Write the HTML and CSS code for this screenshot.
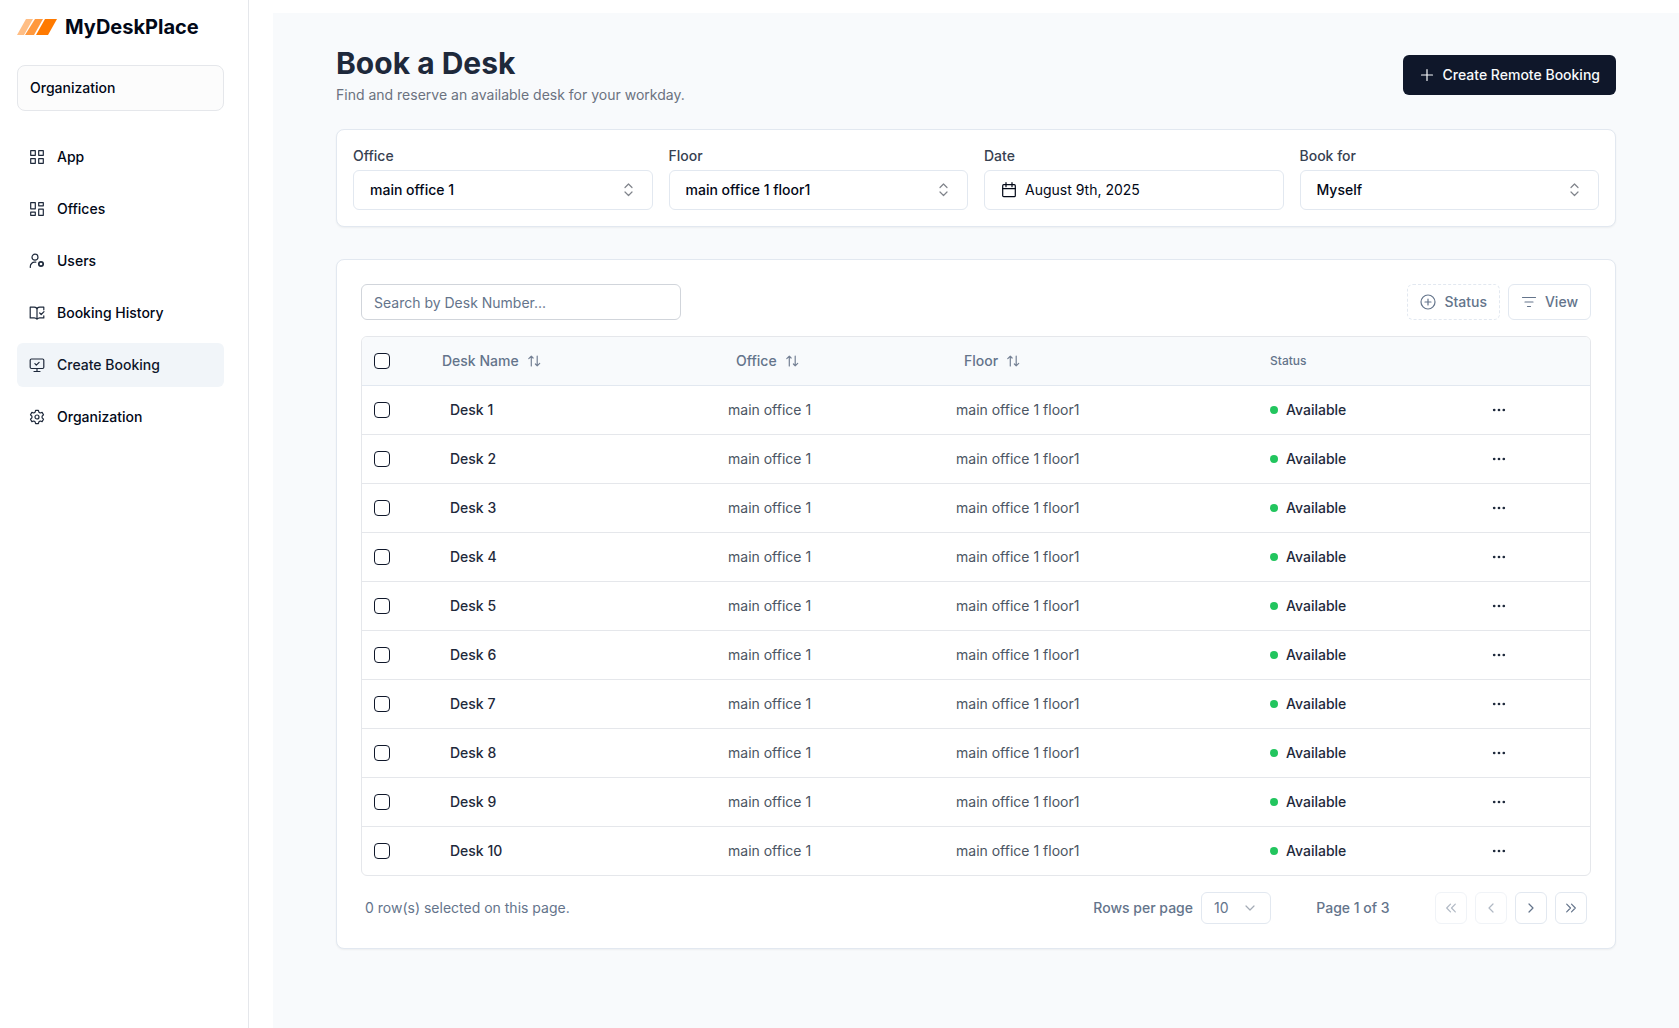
FILE: index.html
```html
<!DOCTYPE html>
<html lang="en">
<head>
<meta charset="utf-8">
<meta name="viewport" content="width=device-width, initial-scale=1">
<title>Book a Desk - MyDeskPlace</title>
<link rel="stylesheet" href="styles.css">
</head>
<body>
<svg class="sprite" aria-hidden="true">
  <symbol id="i-updown" viewBox="0 0 16 16"><path d="M4 5.500 7.500 2 11 5.500M4 10l3.500 3.500L11 10"/></symbol>
  <symbol id="i-sort" viewBox="0 0 16 16"><path d="M4.300 13V3.200M1.800 5.700l2.500-2.500 1.800 1.800M10.200 3v9.800M12.700 10.300l-2.500 2.500-1.800-1.800"/></symbol>
  <symbol id="i-dots" viewBox="0 0 16 16"><g fill="currentColor" stroke="none"><circle cx="3.200" cy="8" r="1.350"/><circle cx="8" cy="8" r="1.350"/><circle cx="12.800" cy="8" r="1.350"/></g></symbol>
</svg>
<div class="app">
  <aside class="sidebar">
    <a class="brand" href="#">
      <svg width="40" height="16" viewBox="0 0 40 16"><path fill="#ffbe85" d="M9 0h7L7 16H0z"/><path fill="#ff983d" d="M18 0h8l-9 16H8z"/><path fill="#ff7a00" d="M28 0h12l-9 16H19z"/></svg>
      <span>MyDeskPlace</span>
    </a>
    <div class="org">Organization</div>
    <nav class="nav">
      <a href="#"><svg class="icon" viewBox="0 0 16 16"><path d="M1.700 1.700h4.600v4.600H1.700zM9.700 1.700h4.600v4.600H9.700zM1.700 9.700h4.600v4.600H1.700zM9.700 9.700h4.600v4.600H9.700z"/></svg>App</a>
      <a href="#"><svg class="icon" viewBox="0 0 16 16"><path d="M1.700 1.700h4.600v6.100H1.700zM9.700 1.700h4.600v3.100H9.700zM1.700 11.200h4.600v3.100H1.700zM9.700 8.200h4.600v6.100H9.700z"/></svg>Offices</a>
      <a href="#"><svg class="icon" viewBox="0 0 16 16"><circle cx="6" cy="4.200" r="3"/><path d="M1.300 14.500v-1a4.300 4.300 0 0 1 4.300-4.300h1.200"/><circle cx="12" cy="11" r="2.200" stroke-width="1.700"/></svg>Users</a>
      <a href="#"><svg class="icon" viewBox="0 0 16 16"><path d="M8 14.200c-.8-.9-1.500-1.300-2.800-1.300H1.200V2.200h4c1.800 0 2.800.9 2.800 2.400v9.600c.8-.9 1.500-1.300 2.800-1.300h4V10.800M8 4.600c0-1.500 1-2.400 2.800-2.400h4v2.600M10.700 8l1.500 1.500 2.800-2.800"/></svg>Booking History</a>
      <a href="#" class="active" aria-current="page"><svg class="icon" viewBox="0 0 16 16"><rect x="1.200" y="2" width="13.600" height="9.500" rx="1.200"/><path d="M8 11.500V14.500M5 14.500h6M5.900 6.700l1.400 1.400 2.800-2.800"/></svg>Create Booking</a>
      <a href="#"><svg class="icon" viewBox="0 0 16 16"><path d="M6.600 1.300h2.800l.5 1.900 1.300.8 1.900-.6 1.400 2.400-1.400 1.400v1.600l1.400 1.400-1.400 2.400-1.900-.6-1.300.8-.5 1.900H6.600l-.5-1.900-1.300-.8-1.900.6-1.400-2.400 1.400-1.400V7.200L1.500 5.800l1.400-2.400 1.900.6 1.300-.8z"/><circle cx="8" cy="8" r="2"/></svg>Organization</a>
    </nav>
  </aside>
  <main class="main">
    <div class="content">
      <header class="head">
        <div>
          <h1>Book a Desk</h1>
          <p>Find and reserve an available desk for your workday.</p>
        </div>
        <button class="primary" type="button"><svg class="icon" viewBox="0 0 16 16"><path d="M8 2.500v11M2.500 8h11"/></svg>Create Remote Booking</button>
      </header>

      <section class="card filters">
        <div class="field">
          <label for="office">Office</label>
          <div class="select"><select id="office"><option>main office 1</option></select><svg class="icon"><use href="#i-updown"/></svg></div>
        </div>
        <div class="field">
          <label for="floor">Floor</label>
          <div class="select"><select id="floor"><option>main office 1 floor1</option></select><svg class="icon"><use href="#i-updown"/></svg></div>
        </div>
        <div class="field">
          <label for="date">Date</label>
          <button class="date" id="date" type="button"><svg class="icon" viewBox="0 0 16 16"><rect x="1.700" y="2.700" width="12.600" height="12" rx="1"/><path d="M1.700 6.700h12.600M5 .7v4M11 .7v4"/></svg>August 9th, 2025</button>
        </div>
        <div class="field">
          <label for="bookfor">Book for</label>
          <div class="select"><select id="bookfor"><option>Myself</option></select><svg class="icon"><use href="#i-updown"/></svg></div>
        </div>
      </section>

      <section class="card desks">
        <div class="toolbar">
          <input class="search" type="text" placeholder="Search by Desk Number..." aria-label="Search by Desk Number">
          <div class="tools">
            <button class="tool dashed" type="button"><svg class="icon" viewBox="0 0 16 16"><circle cx="8" cy="8" r="7"/><path d="M8 5v6M5 8h6"/></svg>Status</button>
            <button class="tool" type="button"><svg class="icon" viewBox="0 0 16 16"><path d="M1.500 3.500h13M4 8h8M6.500 12.500h3"/></svg>View</button>
          </div>
        </div>
        <div class="table-box">
          <table>
            <colgroup><col class="c-check"><col class="c-name"><col class="c-office"><col class="c-floor"><col class="c-status"><col class="c-more"></colgroup>
            <thead>
              <tr>
                <th><input type="checkbox" aria-label="Select all"></th>
                <th><button class="sort" type="button">Desk Name<svg class="icon"><use href="#i-sort"/></svg></button></th>
                <th><button class="sort inset" type="button">Office<svg class="icon"><use href="#i-sort"/></svg></button></th>
                <th><button class="sort inset" type="button">Floor<svg class="icon"><use href="#i-sort"/></svg></button></th>
                <th>Status</th>
                <th></th>
              </tr>
            </thead>
            <tbody id="rows"></tbody>
          </table>
        </div>
        <footer class="foot">
          <span class="selected">0 row(s) selected on this page.</span>
          <div class="paging">
            <div class="per-page">
              <label for="size">Rows per page</label>
              <div class="select small"><select id="size"><option>10</option></select><svg class="icon" viewBox="0 0 16 16"><path d="m3 6 4 4 4-4"/></svg></div>
            </div>
            <span class="page">Page 1 of 3</span>
            <div class="pager">
              <button type="button" disabled aria-label="First page"><svg class="icon" viewBox="0 0 16 16"><path d="M7.500 4.200 3.700 8l3.800 3.800M12.300 4.200 8.500 8l3.800 3.800"/></svg></button>
              <button type="button" disabled aria-label="Previous page"><svg class="icon" viewBox="0 0 16 16"><path d="M10 4 6 8l4 4"/></svg></button>
              <button type="button" aria-label="Next page"><svg class="icon" viewBox="0 0 16 16"><path d="M6 4l4 4-4 4"/></svg></button>
              <button type="button" aria-label="Last page"><svg class="icon" viewBox="0 0 16 16"><path d="M3.700 4.200 7.500 8l-3.800 3.800M8.500 4.200 12.300 8l-3.800 3.800"/></svg></button>
            </div>
          </div>
        </footer>
      </section>
    </div>
  </main>
</div>
<script src="desks.js"></script>
</body>
</html>
```
FILE: styles.css
```css
*, *::before, *::after { box-sizing: border-box; }
body { margin: 0; background: #fff; color: #020817; font: 14px/20px Inter, "Liberation Sans", sans-serif; }
button, input, select { font: inherit; color: inherit; margin: 0; }
button { cursor: pointer; background: none; border: 0; padding: 0; }
a { color: inherit; text-decoration: none; }
.sprite { display: none; }
.icon { width: 16px; height: 16px; flex: none; fill: none; stroke: currentColor; stroke-width: 1.2; stroke-linecap: round; stroke-linejoin: round; }

.app { display: flex; min-height: 100vh; }
.sidebar { flex: 0 0 249px; padding: 12px 24px 0 17px; border-right: 1px solid #e5e7eb; }
.brand { display: flex; align-items: center; gap: 8px; height: 30px; font-size: 20px; line-height: 30px; font-weight: 700; }
.org { margin-top: 23px; padding: 12px; border: 1px solid #e5e7eb; border-radius: 8px; background: #fcfcfc; font-weight: 500; }
.nav { display: grid; gap: 8px; margin-top: 24px; }
.nav a { display: flex; align-items: center; gap: 12px; height: 44px; padding: 0 12px; border-radius: 6px; font-weight: 500; }
.nav .active { background: #f1f5f9; color: #0f172a; }
.nav .icon { color: #1e293b; }

.main { flex: 1; min-width: 0; margin: 13px 0 0 24px; padding-top: 32px; background: #f8fafc; }
.content { max-width: 1280px; margin: 0 auto; }
.head { display: flex; justify-content: space-between; align-items: center; }
h1 { margin: 0; font-size: 30px; line-height: 36px; font-weight: 700; color: #1e293b; }
.head p { margin: 4px 0 0; color: #6b7280; }
.primary { display: flex; align-items: center; gap: 8px; height: 40px; padding: 0 16px; border-radius: 6px; background: #0f172a; color: #f8fafc; font-weight: 500; }

.card { border: 1px solid #e2e8f0; border-radius: 8px; background: #fff; box-shadow: 0 1px 2px rgba(0, 0, 0, .05); }
.filters { display: grid; grid-template-columns: repeat(4, 1fr); gap: 16px; margin-top: 24px; padding: 16px; }
.field { display: grid; gap: 4px; }
.field label { font-weight: 500; color: #374151; }
.select { display: grid; align-items: center; }
.select > * { grid-area: 1 / 1; }
.select select { appearance: none; width: 100%; height: 40px; padding: 0 16px; border: 1px solid #e2e8f0; border-radius: 6px; background: #fff; font-weight: 500; }
.select .icon { justify-self: end; margin-right: 16px; pointer-events: none; color: #80848b; }
.date { display: flex; align-items: center; gap: 8px; height: 40px; padding: 0 16px; border: 1px solid #e2e8f0; border-radius: 6px; background: #fff; }

.desks { margin-top: 32px; padding: 24px; }
.toolbar { display: flex; justify-content: space-between; }
.search { width: 320px; height: 36px; padding: 0 12px; border: 1px solid #d1d5db; border-radius: 6px; background: #fff; }
.search::placeholder { color: #64748b; opacity: 1; }
.tools { display: flex; gap: 8px; }
.tool { display: flex; align-items: center; gap: 8px; height: 36px; padding: 0 12px; border: 1px solid #e2e8f0; border-radius: 6px; background: #fff; color: #64748b; font-weight: 500; }
.dashed { border-style: dashed; }
.table-box { margin-top: 16px; border: 1px solid #e5e7eb; border-radius: 6px; overflow: hidden; }
table { width: 100%; table-layout: fixed; border-collapse: separate; border-spacing: 0; }
.c-check { width: 68px; }
.c-name { width: 286px; }
.c-office { width: 228px; }
.c-floor { width: 314px; }
.c-status { width: 213px; }
.c-more { width: 119px; }
th, td { height: 49px; padding: 0 12px; border-bottom: 1px solid #e5e7eb; text-align: left; vertical-align: middle; }
th { background: #f8fafc; color: #64748b; font-size: 12px; line-height: 16px; font-weight: 500; border-bottom-color: #e2e8f0; }
tbody tr:last-child td { height: 48px; border-bottom: 0; }
td { color: #4b5563; }
.name { padding-left: 20px; font-weight: 500; color: #1e293b; }
input[type="checkbox"] { appearance: none; display: block; width: 16px; height: 16px; border: 1px solid #0f172a; border-radius: 4px; background: #fff; }
.sort { display: flex; align-items: center; gap: 8px; font-size: 14px; line-height: 20px; font-weight: 500; }
.inset { padding-left: 8px; }
.sort .icon { color: #748094; }
.status { display: flex; align-items: center; gap: 8px; font-weight: 500; color: #1e293b; }
.status::before { content: ""; width: 8px; height: 8px; border-radius: 50%; background: #22c55e; }
.more { display: flex; align-items: center; justify-content: center; width: 32px; height: 32px; color: #1e293b; }

.foot { display: flex; align-items: center; justify-content: space-between; margin-top: 16px; padding: 0 4px; color: #64748b; }
.paging { display: flex; align-items: center; gap: 32px; font-weight: 500; }
.per-page, .pager { display: flex; align-items: center; gap: 8px; }
.small { width: 70px; }
.small select { height: 32px; padding: 0 12px; font-weight: 400; }
.small .icon { margin-right: 12px; color: #a3aab5; }
.page { width: 100px; text-align: center; }
.pager button { display: grid; place-items: center; width: 32px; height: 32px; border: 1px solid #e2e8f0; border-radius: 6px; background: #fff; }
.pager button:disabled { opacity: .5; }
```
FILE: desks.js
```js
const rows = document.getElementById("rows");
for (let n = 1; n <= 10; n++) {
  rows.insertAdjacentHTML("beforeend", `<tr>
    <td><input type="checkbox" aria-label="Select Desk ${n}"></td>
    <td class="name">Desk ${n}</td>
    <td>main office 1</td>
    <td>main office 1 floor1</td>
    <td><div class="status">Available</div></td>
    <td><button class="more" type="button" aria-label="Actions for Desk ${n}"><svg class="icon"><use href="#i-dots"/></svg></button></td>
  </tr>`);
}
```
